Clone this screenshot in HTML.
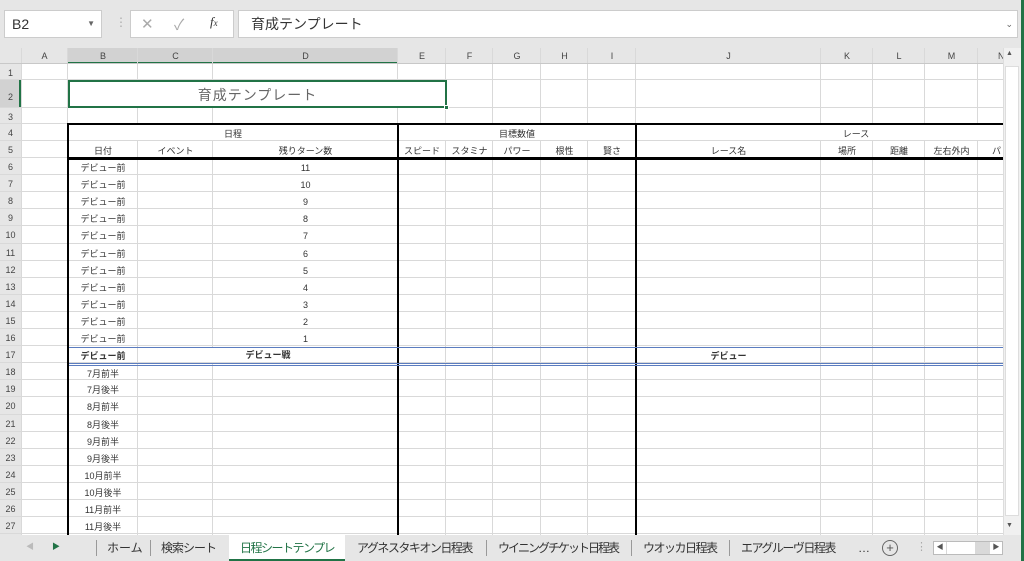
<!DOCTYPE html>
<html><head><meta charset="utf-8"><style>
*{margin:0;padding:0;box-sizing:border-box}
body{width:1024px;height:561px;overflow:hidden;background:#fff;position:relative;font-family:"Liberation Sans","Noto Sans CJK JP",sans-serif;color:#333}
.a{position:absolute}
.v{position:absolute;width:1px;background:#d9d9d9;top:48px;height:487px}
.h{position:absolute;height:1px;background:#d9d9d9;left:0;width:1003px}
.t{position:absolute;font-size:9px;text-align:center;white-space:nowrap;line-height:17px;height:17px;margin-top:2px}
.rn{position:absolute;left:0;width:21px;font-size:9px;text-align:center;color:#444;line-height:17px;margin-top:1px}
.ch{position:absolute;top:48px;height:16px;font-size:9px;line-height:16px;text-align:center;color:#444}
.tab{position:absolute;top:535px;height:26px;line-height:26px;font-size:12px;letter-spacing:-1.5px;color:#333;white-space:nowrap}
.sep{position:absolute;top:540px;width:1px;height:16px;background:#999}
</style></head><body>
<div class="a" style="left:0;top:0;width:1024px;height:48px;background:#e6e6e6"></div>
<div class="a" style="left:4px;top:10px;width:98px;height:28px;background:#fff;border:1px solid #ccc;font-size:14px;line-height:26px;padding-left:7px;color:#333">B2<span style="position:absolute;right:6px;top:0;font-size:8px;color:#666">▼</span></div>
<div class="a" style="left:115px;top:15px;font-size:12px;color:#aaa">⋮</div>
<div class="a" style="left:130px;top:10px;width:104px;height:28px;background:#fff;border:1px solid #ccc"></div>
<div class="a" style="left:141px;top:15px;font-size:15px;color:#aaa">✕</div>
<div class="a" style="left:174px;top:14px;font-size:15px;color:#aaa">✓</div>
<div class="a" style="left:210px;top:14px;font-size:13px;font-style:italic;font-family:'Liberation Serif',serif;color:#333">f<span style="font-size:9px">x</span></div>
<div class="a" style="left:238px;top:10px;width:780px;height:28px;background:#fff;border:1px solid #ccc;font-size:14px;line-height:26px;padding-left:12px;color:#333">育成テンプレート<span style="position:absolute;right:4px;top:0;font-size:9px;color:#666">⌄</span></div>
<div class="a" style="left:0;top:48px;width:1003px;height:16px;background:#e6e6e6"></div>
<div class="a" style="left:68px;top:48px;width:330px;height:16px;background:#d2d2d2;border-bottom:2px solid #217346"></div>
<div class="a" style="left:0;top:48px;width:21px;height:487px;background:#e6e6e6"></div>
<div class="a" style="left:0;top:80px;width:21px;height:28px;background:#d2d2d2;border-right:2px solid #217346"></div>
<div class="v" style="left:21px"></div><div class="v" style="left:67px"></div><div class="v" style="left:137px"></div><div class="v" style="left:212px"></div><div class="v" style="left:397px"></div><div class="v" style="left:445px"></div><div class="v" style="left:492px"></div><div class="v" style="left:540px"></div><div class="v" style="left:587px"></div><div class="v" style="left:635px"></div><div class="v" style="left:820px"></div><div class="v" style="left:872px"></div><div class="v" style="left:924px"></div><div class="v" style="left:977px"></div>
<div class="h" style="top:63px;background:#c8c8c8"></div><div class="h" style="top:79px"></div><div class="h" style="top:107px"></div><div class="h" style="top:123px"></div><div class="h" style="top:140px"></div><div class="h" style="top:157px"></div><div class="h" style="top:174px"></div><div class="h" style="top:191px"></div><div class="h" style="top:208px"></div><div class="h" style="top:225px"></div><div class="h" style="top:243px"></div><div class="h" style="top:260px"></div><div class="h" style="top:277px"></div><div class="h" style="top:294px"></div><div class="h" style="top:311px"></div><div class="h" style="top:328px"></div><div class="h" style="top:345px"></div><div class="h" style="top:362px"></div><div class="h" style="top:379px"></div><div class="h" style="top:396px"></div><div class="h" style="top:414px"></div><div class="h" style="top:431px"></div><div class="h" style="top:448px"></div><div class="h" style="top:465px"></div><div class="h" style="top:482px"></div><div class="h" style="top:499px"></div><div class="h" style="top:516px"></div><div class="h" style="top:533px"></div>
<div class="a" style="left:69px;top:80px;width:377px;height:27px;background:#fff"></div>
<div class="a" style="left:69px;top:125px;width:328px;height:15px;background:#fff"></div>
<div class="a" style="left:399px;top:125px;width:236px;height:15px;background:#fff"></div>
<div class="a" style="left:637px;top:125px;width:366px;height:15px;background:#fff"></div>
<div class="a" style="left:139px;top:348px;width:258px;height:14px;background:#fff"></div>
<div class="a" style="left:68px;top:80px;width:379px;height:28px;border:2px solid #217346;font-size:14px;color:#666;text-align:center;line-height:26px;letter-spacing:1px">育成テンプレート</div>
<div class="a" style="left:444px;top:105px;width:5px;height:5px;background:#217346;border:1px solid #fff"></div>
<div class="a" style="left:68px;top:123px;width:935px;height:2px;background:#000"></div>
<div class="a" style="left:68px;top:157px;width:935px;height:3px;background:#000"></div>
<div class="a" style="left:67px;top:123px;width:2px;height:412px;background:#000"></div>
<div class="a" style="left:397px;top:123px;width:2px;height:412px;background:#000"></div>
<div class="a" style="left:635px;top:123px;width:2px;height:412px;background:#000"></div>
<div class="a" style="left:69px;top:347px;width:934px;height:1px;background:#5b7cbf"></div>
<div class="a" style="left:69px;top:363px;width:934px;height:1px;background:#5b7cbf"></div>
<div class="a" style="left:69px;top:365px;width:934px;height:1px;background:#5b7cbf"></div>
<div class="ch" style="left:21px;width:47px">A</div><div class="ch" style="left:68px;width:70px">B</div><div class="ch" style="left:138px;width:75px">C</div><div class="ch" style="left:213px;width:185px">D</div><div class="ch" style="left:398px;width:48px">E</div><div class="ch" style="left:446px;width:47px">F</div><div class="ch" style="left:493px;width:48px">G</div><div class="ch" style="left:541px;width:47px">H</div><div class="ch" style="left:588px;width:48px">I</div><div class="ch" style="left:636px;width:185px">J</div><div class="ch" style="left:821px;width:52px">K</div><div class="ch" style="left:873px;width:52px">L</div><div class="ch" style="left:925px;width:53px">M</div><div class="ch" style="left:978px;width:25px;text-align:left;padding-left:20px">N</div>
<div class="rn" style="top:64px;line-height:16px">1</div><div class="rn" style="top:88px">2</div><div class="rn" style="top:108px;line-height:16px">3</div><div class="rn" style="top:124px">4</div><div class="rn" style="top:141px">5</div><div class="rn" style="top:158px">6</div><div class="rn" style="top:175px">7</div><div class="rn" style="top:192px">8</div><div class="rn" style="top:209px">9</div><div class="rn" style="top:226px">10</div><div class="rn" style="top:244px">11</div><div class="rn" style="top:261px">12</div><div class="rn" style="top:278px">13</div><div class="rn" style="top:295px">14</div><div class="rn" style="top:312px">15</div><div class="rn" style="top:329px">16</div><div class="rn" style="top:346px">17</div><div class="rn" style="top:363px">18</div><div class="rn" style="top:380px">19</div><div class="rn" style="top:397px">20</div><div class="rn" style="top:415px">21</div><div class="rn" style="top:432px">22</div><div class="rn" style="top:449px">23</div><div class="rn" style="top:466px">24</div><div class="rn" style="top:483px">25</div><div class="rn" style="top:500px">26</div><div class="rn" style="top:517px">27</div>
<div class="t" style="left:68px;width:330px;top:124px">日程</div>
<div class="t" style="left:398px;width:238px;top:124px">目標数値</div>
<div class="t" style="left:636px;width:440px;top:124px">レース</div>
<div class="t" style="left:68px;width:70px;top:141px">日付</div><div class="t" style="left:138px;width:75px;top:141px">イベント</div><div class="t" style="left:213px;width:185px;top:141px">残りターン数</div><div class="t" style="left:398px;width:48px;top:141px">スピード</div><div class="t" style="left:446px;width:47px;top:141px">スタミナ</div><div class="t" style="left:493px;width:48px;top:141px">パワー</div><div class="t" style="left:541px;width:47px;top:141px">根性</div><div class="t" style="left:588px;width:48px;top:141px">賢さ</div><div class="t" style="left:636px;width:185px;top:141px">レース名</div><div class="t" style="left:821px;width:52px;top:141px">場所</div><div class="t" style="left:873px;width:52px;top:141px">距離</div><div class="t" style="left:925px;width:53px;top:141px">左右外内</div><div class="t" style="left:992px;top:141px">パ</div>
<div class="t" style="left:68px;width:70px;top:158px">デビュー前</div><div class="t" style="left:68px;width:70px;top:175px">デビュー前</div><div class="t" style="left:68px;width:70px;top:192px">デビュー前</div><div class="t" style="left:68px;width:70px;top:209px">デビュー前</div><div class="t" style="left:68px;width:70px;top:226px">デビュー前</div><div class="t" style="left:68px;width:70px;top:244px">デビュー前</div><div class="t" style="left:68px;width:70px;top:261px">デビュー前</div><div class="t" style="left:68px;width:70px;top:278px">デビュー前</div><div class="t" style="left:68px;width:70px;top:295px">デビュー前</div><div class="t" style="left:68px;width:70px;top:312px">デビュー前</div><div class="t" style="left:68px;width:70px;top:329px">デビュー前</div>
<div class="t" style="left:68px;width:70px;top:346px;font-weight:bold">デビュー前</div>
<div class="t" style="left:138px;width:260px;top:345px;font-weight:bold">デビュー戦</div>
<div class="t" style="left:636px;width:185px;top:346px;font-weight:bold">デビュー</div>
<div class="t" style="left:68px;width:70px;top:364px">7月前半</div><div class="t" style="left:68px;width:70px;top:380px">7月後半</div><div class="t" style="left:68px;width:70px;top:397px">8月前半</div><div class="t" style="left:68px;width:70px;top:415px">8月後半</div><div class="t" style="left:68px;width:70px;top:432px">9月前半</div><div class="t" style="left:68px;width:70px;top:449px">9月後半</div><div class="t" style="left:68px;width:70px;top:466px">10月前半</div><div class="t" style="left:68px;width:70px;top:483px">10月後半</div><div class="t" style="left:68px;width:70px;top:500px">11月前半</div><div class="t" style="left:68px;width:70px;top:517px">11月後半</div>
<div class="t" style="left:213px;width:185px;top:158px">11</div><div class="t" style="left:213px;width:185px;top:175px">10</div><div class="t" style="left:213px;width:185px;top:192px">9</div><div class="t" style="left:213px;width:185px;top:209px">8</div><div class="t" style="left:213px;width:185px;top:226px">7</div><div class="t" style="left:213px;width:185px;top:244px">6</div><div class="t" style="left:213px;width:185px;top:261px">5</div><div class="t" style="left:213px;width:185px;top:278px">4</div><div class="t" style="left:213px;width:185px;top:295px">3</div><div class="t" style="left:213px;width:185px;top:312px">2</div><div class="t" style="left:213px;width:185px;top:329px">1</div>
<div class="a" style="left:1003px;top:48px;width:18px;height:487px;background:#f0f0f0;border-left:1px solid #ddd"></div>
<div class="a" style="left:1005px;top:66px;width:14px;height:450px;background:#fff;border:1px solid #ddd"></div>
<div class="a" style="left:1006px;top:50px;font-size:7px;color:#555">▲</div>
<div class="a" style="left:1006px;top:522px;font-size:7px;color:#555">▼</div>
<div class="a" style="left:1021px;top:0;width:3px;height:561px;background:#217346"></div>
<div class="a" style="left:0;top:535px;width:1021px;height:26px;background:#e6e6e6"></div>
<div class="a" style="left:26px;top:541px;font-size:8px;color:#bbb">◀</div>
<div class="a" style="left:52px;top:541px;font-size:8px;color:#217346">▶</div>
<div class="sep" style="left:96px"></div>
<div class="tab" style="left:107px;letter-spacing:0">ホーム</div>
<div class="sep" style="left:150px"></div>
<div class="tab" style="left:161px;letter-spacing:-1px">検索シート</div>
<div class="a" style="left:229px;top:535px;width:116px;height:26px;background:#fff;border-bottom:2px solid #217346"></div>
<div class="tab" style="left:240px;color:#217346">日程シートテンプレ</div>
<div class="tab" style="left:357px">アグネスタキオン日程表</div>
<div class="sep" style="left:486px"></div>
<div class="tab" style="left:498px;letter-spacing:-2px">ウイニングチケット日程表</div>
<div class="sep" style="left:631px"></div>
<div class="tab" style="left:643px">ウオッカ日程表</div>
<div class="sep" style="left:729px"></div>
<div class="tab" style="left:741px">エアグルーヴ日程表</div>
<div class="tab" style="left:858px;font-size:12px;letter-spacing:0">…</div>
<div class="a" style="left:882px;top:540px;width:16px;height:16px;border:1px solid #666;border-radius:50%;font-size:13px;line-height:13px;text-align:center;color:#555">+</div>
<div class="a" style="left:916px;top:540px;font-size:11px;color:#aaa">⋮</div>
<div class="a" style="left:933px;top:541px;width:70px;height:14px;background:#d9d9d9;border:1px solid #bbb"></div>
<div class="a" style="left:934px;top:542px;width:12px;height:12px;background:#fff;font-size:7px;text-align:center;line-height:12px;color:#555">◀</div>
<div class="a" style="left:947px;top:542px;width:28px;height:12px;background:#fff"></div>
<div class="a" style="left:990px;top:542px;width:12px;height:12px;background:#fff;font-size:7px;text-align:center;line-height:12px;color:#555">▶</div>
</body></html>
